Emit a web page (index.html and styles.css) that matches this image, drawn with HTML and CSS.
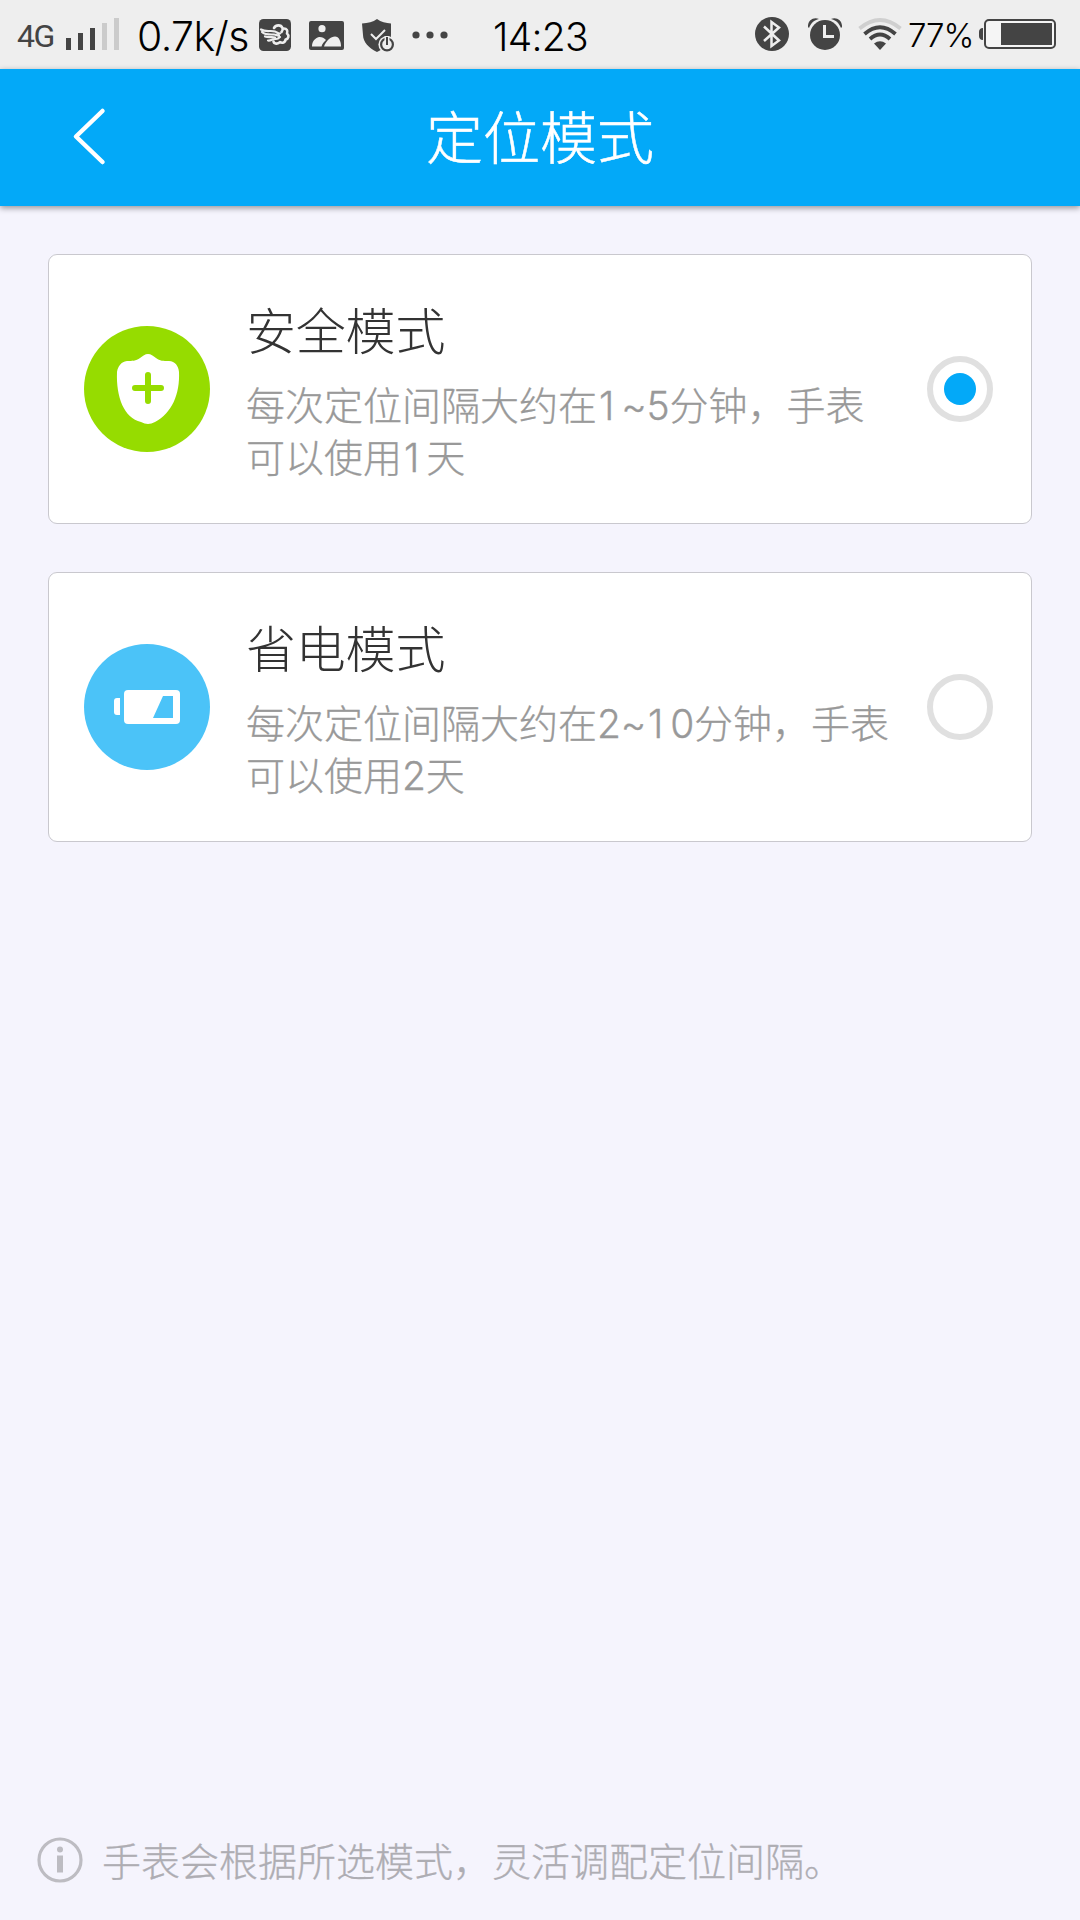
FILE: index.html
```html
<!DOCTYPE html>
<html lang="zh-CN">
<head>
<meta charset="utf-8">
<title>定位模式</title>
<link rel="stylesheet" href="styles.css">
</head>
<body>
<div class="screen">
  <div class="status">
    <span class="net">4G</span>
    <svg class="signal" width="54" height="32" viewBox="0 0 54 32"><path fill="#444" d="M0 20h5v12H0zM12 15h5v17h-5zM24 10h5v22h-5z"/><path fill="#cbcbcb" d="M36 5h5v27h-5zM48 0h5v32h-5z"/></svg>
    <span class="speed">0.7k/s</span>
    <svg class="cloud" width="32" height="32" viewBox="0 0 32 32"><rect width="32" height="32" rx="4.500" fill="#444"/><g fill="none" stroke="#eee" stroke-linecap="round" stroke-linejoin="round"><path stroke-width="2.600" d="M15 9c2-3.500 7-3.500 8.500 0 .5 1.500 0 3-1 4M24 9.500c4-.5 5 2.500 4 5 2.500 2 1.500 5.500-1.500 6 0 3-3.500 4-5.500 2.500-2 2.500-6 2-6.500-.5"/><path stroke-width="2.200" d="M2 10.500c5 3 10 .5 14 2 2 .8 3 2 5 2M3 13c3 3 8 2.500 12 2.500 2 0 3 1.500 5 1M6 17.500c4 1.500 7 0 10 1M9 21.500c3 .5 5-2 8-1.500 2 0 3-1 4-2"/></g></svg>
    <svg class="photo" width="35" height="29" viewBox="0 0 35 29"><rect width="35" height="29" rx="2" fill="#444"/><g fill="#eee"><circle cx="13" cy="7.700" r="3.600"/><path d="M3 25.500c0-5 3-8.500 7-9.500 3-.2 5 1 7 3-2 2-4 4-4.500 6.500z"/><path d="M15 25.500c2-6 7-10 11-10s6 5 6 10z"/></g></svg>
    <svg class="guard" width="33" height="34" viewBox="0 0 33 34"><path fill="#444" d="M15 0c4 3 9 4 14 4.500V16c0 8-6 13-14 17C7 29 1 23 1 16L0 4.500C6 4 11 3 15 0z"/><path fill="none" stroke="#eee" stroke-width="2" d="M9 15l5 5 9-9"/><circle cx="25" cy="25.500" r="8.600" fill="#eee"/><circle cx="25" cy="25.500" r="5.900" fill="none" stroke="#444" stroke-width="2.200"/><path stroke="#eee" stroke-width="5" d="M25 17v7"/><path stroke="#444" stroke-width="2" d="M25 18v8"/></svg>
    <svg class="more" width="36" height="8" viewBox="0 0 36 8"><g fill="#444"><circle cx="4" cy="4" r="3.600"/><circle cx="18" cy="4" r="3.600"/><circle cx="32" cy="4" r="3.600"/></g></svg>
    <span class="time">14:23</span>
    <svg class="bt" width="34" height="34" viewBox="0 0 34 34"><circle cx="17" cy="17" r="17" fill="#444"/><path fill="none" stroke="#eee" stroke-width="2.500" d="M9 9.500l15 14-7.500 5.500V5l7.500 5.500L9 24"/></svg>
    <svg class="alarm" width="34" height="32" viewBox="0 0 34 32"><g fill="#444"><path d="M0 9C-.5 3 5-1.500 11 1 6 2 3 5 1 10zM34 9c.5-6-5-10.500-11-8 5 1 8 4 10 9z"/><circle cx="17" cy="17" r="15"/></g><path fill="none" stroke="#eee" stroke-width="3" d="M16.500 7v11.500H26"/></svg>
    <svg class="wifi" width="44" height="32" viewBox="0 0 44 32"><g fill="none" stroke-width="3.800"><path stroke="#cfcfcf" d="M1.500 10.500Q22-6.500 42.500 10.500"/><path stroke="#444" d="M6.500 16Q22 2.500 37.500 16M12 21Q22 12 32 21"/></g><path fill="#444" d="M16 25.500Q22 21 28 25.500L22 32z"/></svg>
    <span class="pct">77%</span>
    <svg class="batt" width="77" height="30" viewBox="0 0 77 30"><path fill="#444" d="M4 9v12C1 21 0 19 0 17v-4c0-2 1-4 4-4z"/><rect x="6" y="1" width="70" height="28" rx="4" fill="#f5f5f5" stroke="#444" stroke-width="2"/><path fill="#444" d="M22 4h51v22H22z"/></svg>
  </div>
  <header class="bar">
    <svg class="back" width="40" height="60" viewBox="0 0 40 60"><path fill="none" stroke="#fff" stroke-width="4.500" stroke-linecap="round" stroke-linejoin="round" d="M32.500 5L6 30.500 32.500 56"/></svg>
    <h1 class="title">定位模式</h1>
  </header>
  <main class="list">
    <section class="card">
      <svg class="badge" viewBox="0 0 126 126"><circle cx="63" cy="63" r="63" fill="#96dc00"/><path fill="#fff" d="M64 28c-3 0-5 2-8 4-4 3-8 3-13 3-6 1-9 5-10 11-1 25 7 46 24 50 5 2.500 9 2.500 14 0 17-9 25-28 24-50-.5-6-4-11-10-11-6 0-9 0-13-3-3-2-5-4-8-4z"/><path stroke="#96dc00" stroke-width="6" stroke-linecap="round" d="M64 49v26M51 62h26"/></svg>
      <div class="text">
        <h2 class="name">安全模式</h2>
        <p class="desc">每次定位间隔大约在<span class="num"><span class="one">1</span>~5</span>分钟，手表<br>可以使用<span class="num"><span class="one">1</span></span>天</p>
      </div>
      <span class="radio on"></span>
    </section>
    <section class="card">
      <svg class="badge" viewBox="0 0 126 126"><circle cx="63" cy="63" r="63" fill="#4bc3f8"/><rect x="40" y="46" width="56" height="34" rx="4" fill="#fff"/><path fill="#fff" d="M36 54v17h-3q-3 0-3-3V57q0-3 3-3z"/><path fill="#4bc3f8" d="M79 52h10v22H69z"/></svg>
      <div class="text">
        <h2 class="name">省电模式</h2>
        <p class="desc">每次定位间隔大约在<span class="num">2~<span class="one">1</span>0</span>分钟，手表<br>可以使用<span class="num">2</span>天</p>
      </div>
      <span class="radio"></span>
    </section>
  </main>
  <footer class="note">
    <svg width="46" height="46" viewBox="0 0 46 46"><circle cx="23" cy="23" r="21" fill="none" stroke="#bdbcc2" stroke-width="3.200"/><circle cx="23" cy="12.500" r="3" fill="#bdbcc2"/><path fill="#bdbcc2" d="M20 18.500h6v17h-6z"/></svg>
    <span class="hint">手表会根据所选模式，灵活调配定位间隔。</span>
  </footer>
</div>
</body>
</html>
```
FILE: styles.css
```css
* { box-sizing: border-box; }
body { margin: 0; font-family: "Noto Sans CJK SC", sans-serif; font-weight: 300; }
h1, h2, p { margin: 0; font-weight: 300; }
svg { display: block; flex: none; }
.screen { width: 1080px; height: 1920px; display: flex; flex-direction: column; background: #f5f4fd; overflow: hidden; }

.status { height: 69px; flex: none; display: flex; align-items: flex-start; background: #eee; font-family: Inter, "Liberation Sans", sans-serif; white-space: nowrap; color: #000; }
.status span { flex: none; line-height: 40px; }
.net { width: 38px; margin: 16px 0 0 17px; font-family: Roboto, sans-serif; font-weight: 400; font-size: 32px; letter-spacing: -1.5px; color: #444; }
.signal { margin: 18px 0 0 11px; }
.speed { width: 115px; margin: 16px 0 0 17px; font-size: 41px; letter-spacing: -.6px; }
.cloud { margin: 19px 0 0 7px; }
.photo { margin: 21px 0 0 18px; }
.guard { margin: 19px 0 0 18px; }
.more { margin: 31px 0 0 17px; }
.time { width: 100px; margin: 17px 0 0 45px; font-size: 39px; letter-spacing: -.7px; }
.bt { margin: 17px 0 0 162px; }
.alarm { margin: 18px 0 0 19px; }
.wifi { margin: 18px 0 0 16px; }
.pct { width: 70px; margin: 15px 0 0 6px; font-size: 33px; letter-spacing: -1px; }
.batt { margin: 19px 0 0 1px; }

.bar { height: 137px; flex: none; display: grid; grid-template-columns: 140px 1fr 140px; align-items: center; padding-bottom: 4px; background: #03a9f8; box-shadow: 0 2px 6px rgba(0, 0, 0, .4); }
.back { margin-left: 70px; }
.title { padding-bottom: 3px; text-align: center; font-size: 57px; line-height: 80px; color: #fff; -webkit-text-stroke: .5px #fff; }

.list { flex: 1; padding: 48px 48px 0; display: flex; flex-direction: column; gap: 48px; }
.card { height: 270px; display: flex; align-items: center; padding: 0 38px 0 35px; border: 1px solid #c9c8ce; border-radius: 9px; background: #fff; }
.badge { width: 126px; height: 126px; }
.text { flex: 1; margin-left: 36px; white-space: nowrap; }
.name { font-size: 50px; line-height: 70px; letter-spacing: -.2px; color: #333; }
.desc { margin-top: 14px; padding-bottom: 5px; font-size: 39px; line-height: 52px; color: #999; -webkit-text-stroke: .3px #999; }
.num { font-family: Inter, sans-serif; line-height: 0; letter-spacing: -.2px; }
.one { padding: 0 7px 0 2px; }
.radio { flex: none; width: 66px; height: 66px; border: 6px solid #e0e0e0; border-radius: 50%; display: grid; place-items: center; }
.on::after { content: ""; width: 32px; height: 32px; border-radius: 50%; background: #03a9f8; }

.note { height: 120px; flex: none; display: flex; align-items: center; gap: 19px; padding-left: 37px; font-size: 39px; color: #aeadb3; }
.hint { padding-bottom: 2px; -webkit-text-stroke: .3px #aeadb3; }
```
